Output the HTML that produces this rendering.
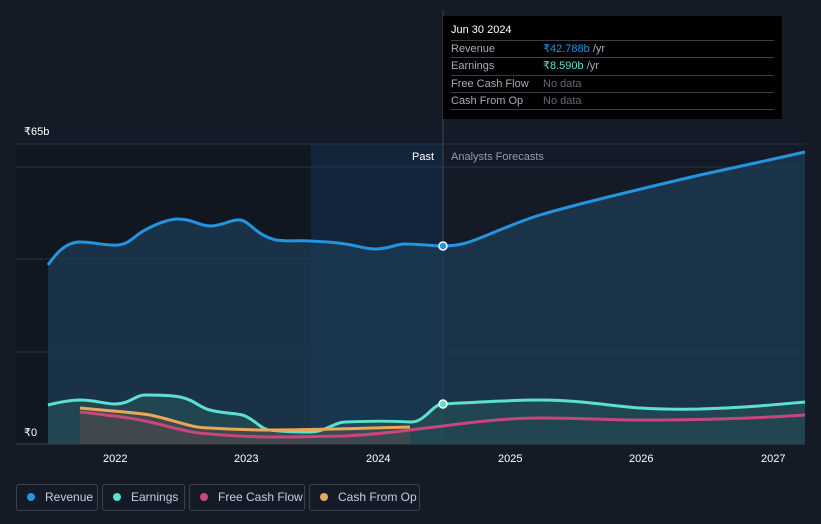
<!DOCTYPE html>
<html><head><style>
body{margin:0;width:821px;height:524px;background:#151b26;font-family:"Liberation Sans",sans-serif;overflow:hidden;position:relative}
.tt{position:absolute;left:443px;top:16px;width:339px;height:103px;background:#000;color:#fff;font-size:11px}
.tt .h{position:absolute;left:8px;top:8px;font-size:11px}
.row{position:absolute;left:8px;width:323px;height:17px;border-top:1px solid #3a3f48;line-height:17px;color:#aab}
.row span{position:absolute;left:92px}
.lg{position:absolute;top:484px;height:27px;border:1px solid #3a404c;border-radius:3px;color:#ccd;font-size:12px;line-height:25px;box-sizing:border-box}
.lg i{position:absolute;left:10px;top:8px;width:8px;height:8px;border-radius:50%}
.lg b{font-weight:normal;position:absolute;left:28px}
</style></head><body>
<svg width="821" height="524" style="position:absolute;left:0;top:0">
<rect x="16" y="144" width="295" height="300" fill="#111720"/>
<rect x="311" y="144" width="132" height="300" fill="#13253a"/>
<line x1="16" y1="144" x2="805" y2="144" stroke="#2a3240"/>
<line x1="16" y1="167" x2="805" y2="167" stroke="#2a3240"/>
<line x1="16" y1="259" x2="805" y2="259" stroke="#2a3240"/>
<line x1="16" y1="352" x2="805" y2="352" stroke="#2a3240"/>
<line x1="16" y1="444" x2="805" y2="444" stroke="#3a404a"/>
<line x1="443" y1="10" x2="443" y2="444" stroke="#3a4350"/>
<path d="M48,265 C55,255 65,242 80,242 C95,242 105,246 118,245 C130,244 135,235 145,230 C160,222 170,219 178,219 C192,219 200,226 210,226 C222,226 232,219 240,220 C250,221 255,235 276,240 C290,242 300,240 310,241 C330,242 340,243 345,244 C360,246 365,249 375,249 C390,249 395,244 405,244 C420,244 430,246 443,246 C460,246 470,242 480,238 C500,230 520,221 540,215 C560,209 580,204 600,199 C640,189 670,182 700,175 C740,166 770,160 805,152 L805,444 L48,444Z" fill="#1e3c55" fill-opacity="0.75"/>
<path d="M48,265 C55,255 65,242 80,242 C95,242 105,246 118,245 C130,244 135,235 145,230 C160,222 170,219 178,219 C192,219 200,226 210,226 C222,226 232,219 240,220 C250,221 255,235 276,240 C290,242 300,240 310,241 C330,242 340,243 345,244 C360,246 365,249 375,249 C390,249 395,244 405,244 C420,244 430,246 443,246 C460,246 470,242 480,238 C500,230 520,221 540,215 C560,209 580,204 600,199 C640,189 670,182 700,175 C740,166 770,160 805,152" fill="none" stroke="#2394e0" stroke-width="3"/>
<path d="M48,405 C60,402 70,400 80,400 C95,400 105,404 115,404 C130,404 135,395 145,395 C165,395 175,396 180,397 C195,400 200,408 210,410 C225,414 240,413 245,416 C255,420 262,430 270,430 C285,432 300,432 310,432 C325,432 335,422 345,422 C370,421 395,421 410,422 C425,423 432,404 443,404 C480,402 510,400 540,400 C580,400 610,406 640,408 C670,410 690,409 700,409 C740,408 770,405 805,402 L805,444 L48,444Z" fill="#2a5a5a" fill-opacity="0.5"/>
<path d="M80,408 C110,411 140,413 150,415 C175,420 190,428 210,428 C240,430 260,430 270,430 C320,430 370,428 410,427 L410,444 L80,444Z" fill="#5a4a4a" fill-opacity="0.5"/>
<path d="M48,405 C60,402 70,400 80,400 C95,400 105,404 115,404 C130,404 135,395 145,395 C165,395 175,396 180,397 C195,400 200,408 210,410 C225,414 240,413 245,416 C255,420 262,430 270,430 C285,432 300,432 310,432 C325,432 335,422 345,422 C370,421 395,421 410,422 C425,423 432,404 443,404 C480,402 510,400 540,400 C580,400 610,406 640,408 C670,410 690,409 700,409 C740,408 770,405 805,402" fill="none" stroke="#5ce0d0" stroke-width="3"/>
<path d="M80,412 C100,414 110,416 115,416 C130,418 140,420 150,422 C175,428 190,433 210,434 C225,435 235,436 240,436 C260,437 270,437 280,437 C310,437 330,436 345,436 C380,434 395,432 410,430 C425,428 435,427 443,426 C480,421 510,418 540,418 C580,418 610,420 640,420 C700,420 760,418 805,415" fill="none" stroke="#c8457e" stroke-width="3"/>
<path d="M80,408 C110,411 140,413 150,415 C175,420 190,428 210,428 C240,430 260,430 270,430 C320,430 370,428 410,427" fill="none" stroke="#e8a85a" stroke-width="3"/>
<circle cx="443" cy="246" r="4" fill="#2394e0" stroke="#fff" stroke-width="1.5"/>
<circle cx="443" cy="404" r="4" fill="#5ce0d0" stroke="#fff" stroke-width="1.5"/>
<g fill="#fff" font-size="11" font-family="Liberation Sans"><text x="24" y="135">₹65b</text><text x="24" y="436">₹0</text>
<text x="103" y="462">2022</text><text x="234" y="462">2023</text><text x="366" y="462">2024</text><text x="498" y="462">2025</text><text x="629" y="462">2026</text><text x="761" y="462">2027</text>
<text x="412" y="160">Past</text><text x="451" y="160" fill="#99a">Analysts Forecasts</text></g>
</svg>
<div class="tt"><div class="h">Jun 30 2024</div>
<div class="row" style="top:24px">Revenue<span style="color:#2394e0">₹42.788b <em style="font-style:normal;color:#aab">/yr</em></span></div>
<div class="row" style="top:41px">Earnings<span style="color:#5ce0d0">₹8.590b <em style="font-style:normal;color:#aab">/yr</em></span></div>
<div class="row" style="top:59px">Free Cash Flow<span style="color:#667">No data</span></div>
<div class="row" style="top:76px">Cash From Op<span style="color:#667">No data</span></div>
<div class="row" style="top:93px;height:0"></div></div>
<div class="lg" style="left:16px;width:82px"><i style="background:#2394e0"></i><b>Revenue</b></div>
<div class="lg" style="left:102px;width:83px"><i style="background:#5ce0d0"></i><b>Earnings</b></div>
<div class="lg" style="left:189px;width:116px"><i style="background:#c8457e"></i><b>Free Cash Flow</b></div>
<div class="lg" style="left:309px;width:111px"><i style="background:#e8a85a"></i><b>Cash From Op</b></div>
</body></html>
